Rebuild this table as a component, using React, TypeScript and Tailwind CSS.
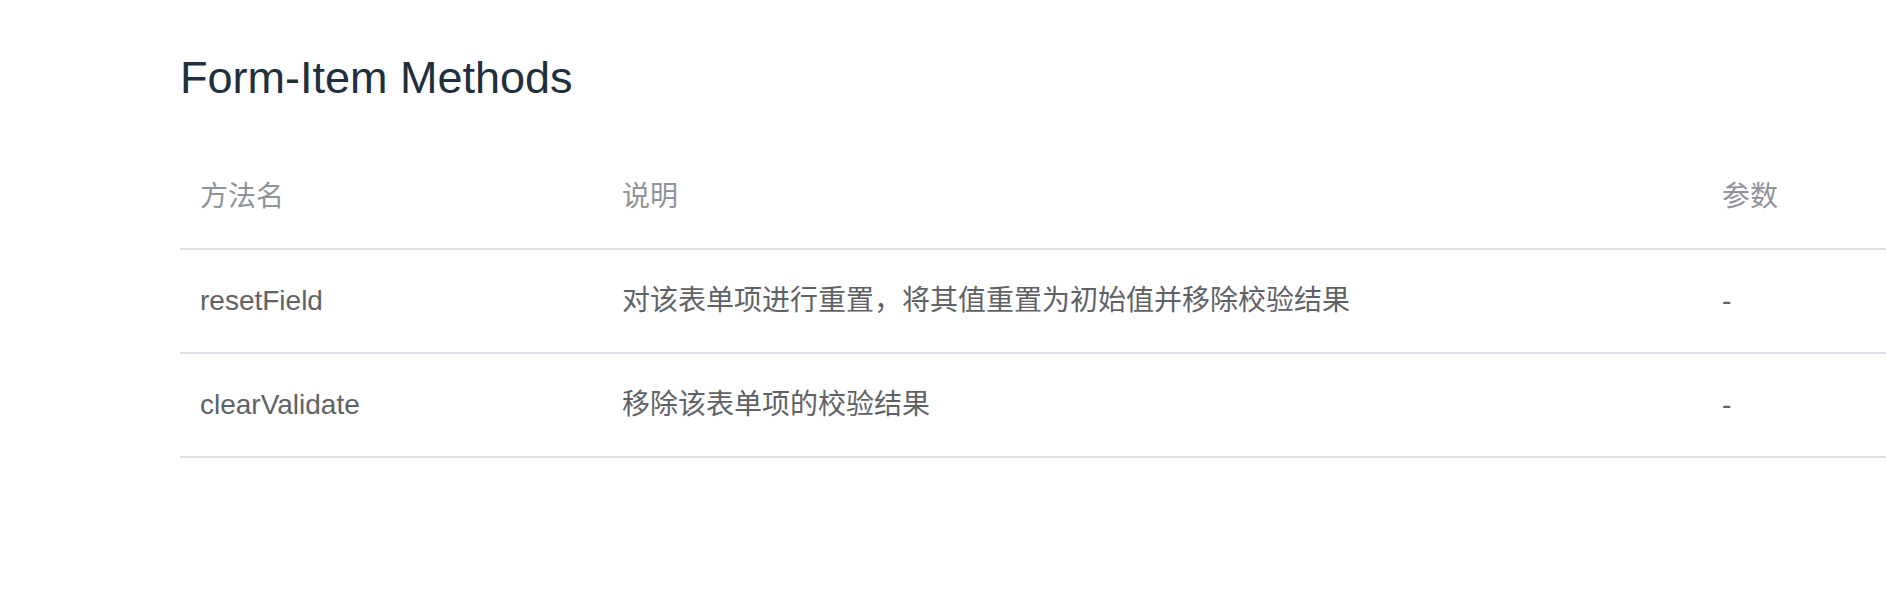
const rows = [
  {
    name: 'resetField',
    desc: '对该表单项进行重置，将其值重置为初始值并移除校验结果',
    params: '-',
  },
  {
    name: 'clearValidate',
    desc: '移除该表单项的校验结果',
    params: '-',
  },
];

const font = "font-['Liberation_Sans','Noto_Sans_CJK_SC',sans-serif]";

export default function App() {
  return (
    <div className={`w-full h-[592px] overflow-hidden bg-white ${font}`}>
      <div className="pl-[180px] pt-[45px]">
        <h3 className="text-[45px] leading-[66px] font-normal text-[#1f2f3d]">
          Form-Item Methods
        </h3>

        <table className="mt-[35px] w-[1900px] table-fixed border-collapse text-[28px] leading-[42px]">
          <colgroup>
            <col className="w-[422px]" />
            <col className="w-[1100px]" />
            <col />
          </colgroup>
          <thead>
            <tr className="border-b-2 border-[#dcdfe6]">
              <th className="px-5 py-[30px] text-left font-normal text-[#909399]">方法名</th>
              <th className="px-5 py-[30px] text-left font-normal text-[#909399]">说明</th>
              <th className="px-5 py-[30px] text-left font-normal text-[#909399]">参数</th>
            </tr>
          </thead>
          <tbody>
            {rows.map((r) => (
              <tr key={r.name} className="border-b-2 border-[#dcdfe6]">
                <td className="px-5 py-[30px] text-[#606266]">{r.name}</td>
                <td className="px-5 py-[30px] text-[#606266]">{r.desc}</td>
                <td className="px-5 py-[30px] text-[#606266]">{r.params}</td>
              </tr>
            ))}
          </tbody>
        </table>
      </div>
    </div>
  );
}
